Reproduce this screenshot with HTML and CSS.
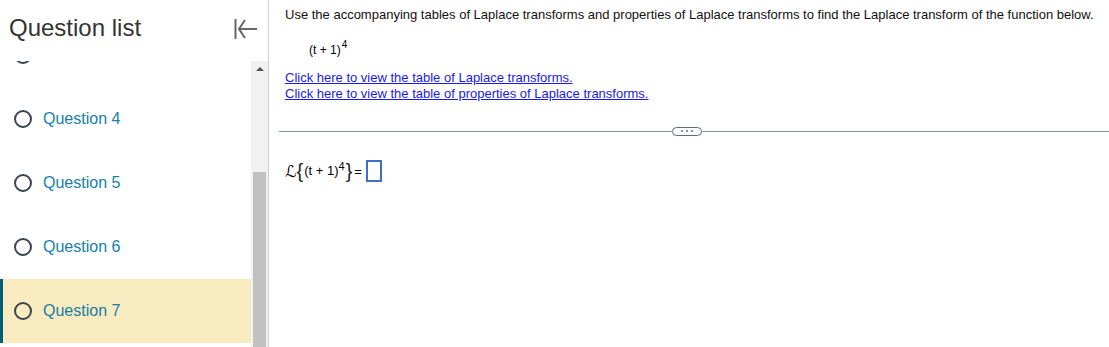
FILE: index.html
```html
<!DOCTYPE html>
<html lang="en">
<head>
<meta charset="utf-8">
<title>Question</title>
<link rel="stylesheet" href="styles.css">
</head>
<body>
<div class="page">
  <aside class="sidebar">
    <div class="side-head">
      <h2 class="side-title">Question list</h2>
      <svg class="collapse" width="28" height="24" viewBox="0 0 28 24" aria-hidden="true">
        <line x1="3.5" y1="2" x2="3.5" y2="22" stroke="#666" stroke-width="2"/>
        <polyline points="13,3 7,12 13,21" fill="none" stroke="#666" stroke-width="2" stroke-linejoin="miter"/>
        <line x1="7" y1="12" x2="25" y2="12" stroke="#666" stroke-width="2"/>
      </svg>
    </div>
    <div class="side-body">
      <div class="q-viewport">
        <ul class="q-list">
          <li class="q-item q-past"><span class="radio"></span><span class="q-label">Question 3</span></li>
          <li class="q-item"><span class="radio"></span><span class="q-label">Question 4</span></li>
          <li class="q-item"><span class="radio"></span><span class="q-label">Question 5</span></li>
          <li class="q-item"><span class="radio"></span><span class="q-label">Question 6</span></li>
          <li class="q-item q-current"><span class="radio"></span><span class="q-label">Question 7</span></li>
        </ul>
      </div>
      <div class="scrollbar">
        <div class="sb-up"><span class="sb-arrow"></span></div>
        <div class="sb-thumb"></div>
      </div>
    </div>
  </aside>
  <main class="main">
    <div class="question">
      <p class="prompt">Use the accompanying tables of Laplace transforms and properties of Laplace transforms to find the Laplace transform of the function below.</p>
      <div class="formula">(t + 1)<sup class="sup">4</sup></div>
      <div class="links">
        <a class="link" href="#">Click here to view the table of Laplace transforms.</a><br>
        <a class="link" href="#">Click here to view the table of properties of Laplace transforms.</a>
      </div>
    </div>
    <div class="separator">
      <span class="sep-line sep-left"></span>
      <span class="more-btn"><span class="dot"></span><span class="dot"></span><span class="dot"></span></span>
      <span class="sep-line sep-right"></span>
    </div>
    <div class="answer">
      <span class="script-l">ℒ</span>
      <span class="brace">{</span>
      <span class="inner">(t + 1)<sup class="sup2">4</sup></span>
      <span class="brace">}</span>
      <span class="eq">=</span>
      <span class="ans-box"></span>
    </div>
  </main>
</div>
</body>
</html>
```
FILE: styles.css
```css
html, body {
  margin: 0;
  padding: 0;
  background: #fff;
}
body {
  font-family: "Liberation Sans", Arial, sans-serif;
  color: #000;
  overflow: hidden;
}
.page {
  display: flex;
  height: 347px;
  width: 1109px;
}
.sidebar {
  width: 268px;
  flex: none;
  border-right: 1px solid #c8cfe2;
  display: flex;
  flex-direction: column;
  height: 347px;
}
.side-head {
  height: 61px;
  flex: none;
  display: flex;
  align-items: flex-start;
}
.side-title {
  margin: 14px 0 0 9px;
  font-size: 24px;
  line-height: 28px;
  font-weight: normal;
  color: #333;
}
.collapse {
  margin: 17px 8px 0 auto;
  display: block;
}
.side-body {
  flex: 1;
  display: flex;
  min-height: 0;
}
.q-viewport {
  flex: 1;
  overflow: hidden;
}
.q-list {
  list-style: none;
  margin: -38px 0 0 0;
  padding: 0;
}
.q-item {
  height: 64px;
  display: flex;
  align-items: center;
  padding-left: 14px;
  box-sizing: border-box;
}
.q-past .q-label {
  visibility: hidden;
}
.q-current {
  background: #f9ebc0;
  border-left: 3px solid #005e74;
  padding-left: 11px;
}
.radio {
  width: 18px;
  height: 18px;
  box-sizing: border-box;
  border: 2px solid #3b4350;
  border-radius: 50%;
  flex: none;
}
.q-label {
  margin-left: 11px;
  font-size: 16px;
  color: #1580a8;
}
.scrollbar {
  width: 17px;
  flex: none;
  background: #f1f1f1;
  display: flex;
  flex-direction: column;
}
.sb-up {
  height: 17px;
  display: flex;
  justify-content: center;
  align-items: center;
}
.sb-arrow {
  width: 0;
  height: 0;
  border-left: 4px solid transparent;
  border-right: 4px solid transparent;
  border-bottom: 4px solid #505050;
  margin-top: -1px;
}
.sb-thumb {
  margin: 94px 2px 0 2px;
  flex: 1;
  background: #c1c1c1;
}
.main {
  flex: 1;
  padding: 7px 0 0 10px;
  min-width: 0;
}
.question {
  padding-left: 6px;
}
.prompt {
  margin: 0;
  font-size: 13px;
  line-height: 16px;
  color: #111;
  white-space: nowrap;
}
.formula {
  margin: 19px 0 0 24px;
  font-size: 12px;
  line-height: 16px;
}
.sup {
  font-size: 10px;
  line-height: 0;
  vertical-align: 6px;
  margin-left: 1px;
}
.links {
  margin-top: 12px;
  font-size: 13px;
  line-height: 16px;
}
.link {
  color: #1a1ae6;
  text-decoration: underline;
}
.separator {
  margin-top: 24px;
  height: 10px;
  display: flex;
  align-items: center;
}
.sep-line {
  height: 1px;
  background: #8792a4;
}
.sep-left {
  width: 393px;
  flex: none;
}
.sep-right {
  flex: 1;
}
.more-btn {
  width: 30px;
  height: 9px;
  box-sizing: border-box;
  border: 1.5px solid #5f6b7d;
  border-radius: 5px;
  display: flex;
  align-items: center;
  justify-content: center;
  gap: 3px;
  flex: none;
  background: #fff;
}
.dot {
  width: 2px;
  height: 2px;
  background: #5f6b7d;
  border-radius: 50%;
}
.answer {
  margin: 24px 0 0 6px;
  display: flex;
  align-items: center;
  height: 22px;
  font-size: 13px;
}
.script-l {
  font-family: "DejaVu Sans", serif;
  font-size: 16px;
  margin-right: 0;
}
.brace {
  font-size: 20px;
  line-height: 22px;
  color: #222;
  margin-top: -1px;
}
.inner {
  line-height: 16px;
  margin: 0 1px;
}
.sup2 {
  font-size: 11px;
  line-height: 0;
  vertical-align: 5px;
}
.eq {
  margin: 0 4px 0 2px;
  font-size: 13px;
}
.ans-box {
  width: 16px;
  height: 22px;
  box-sizing: border-box;
  border: 2px solid #3d6fc6;
}
```
